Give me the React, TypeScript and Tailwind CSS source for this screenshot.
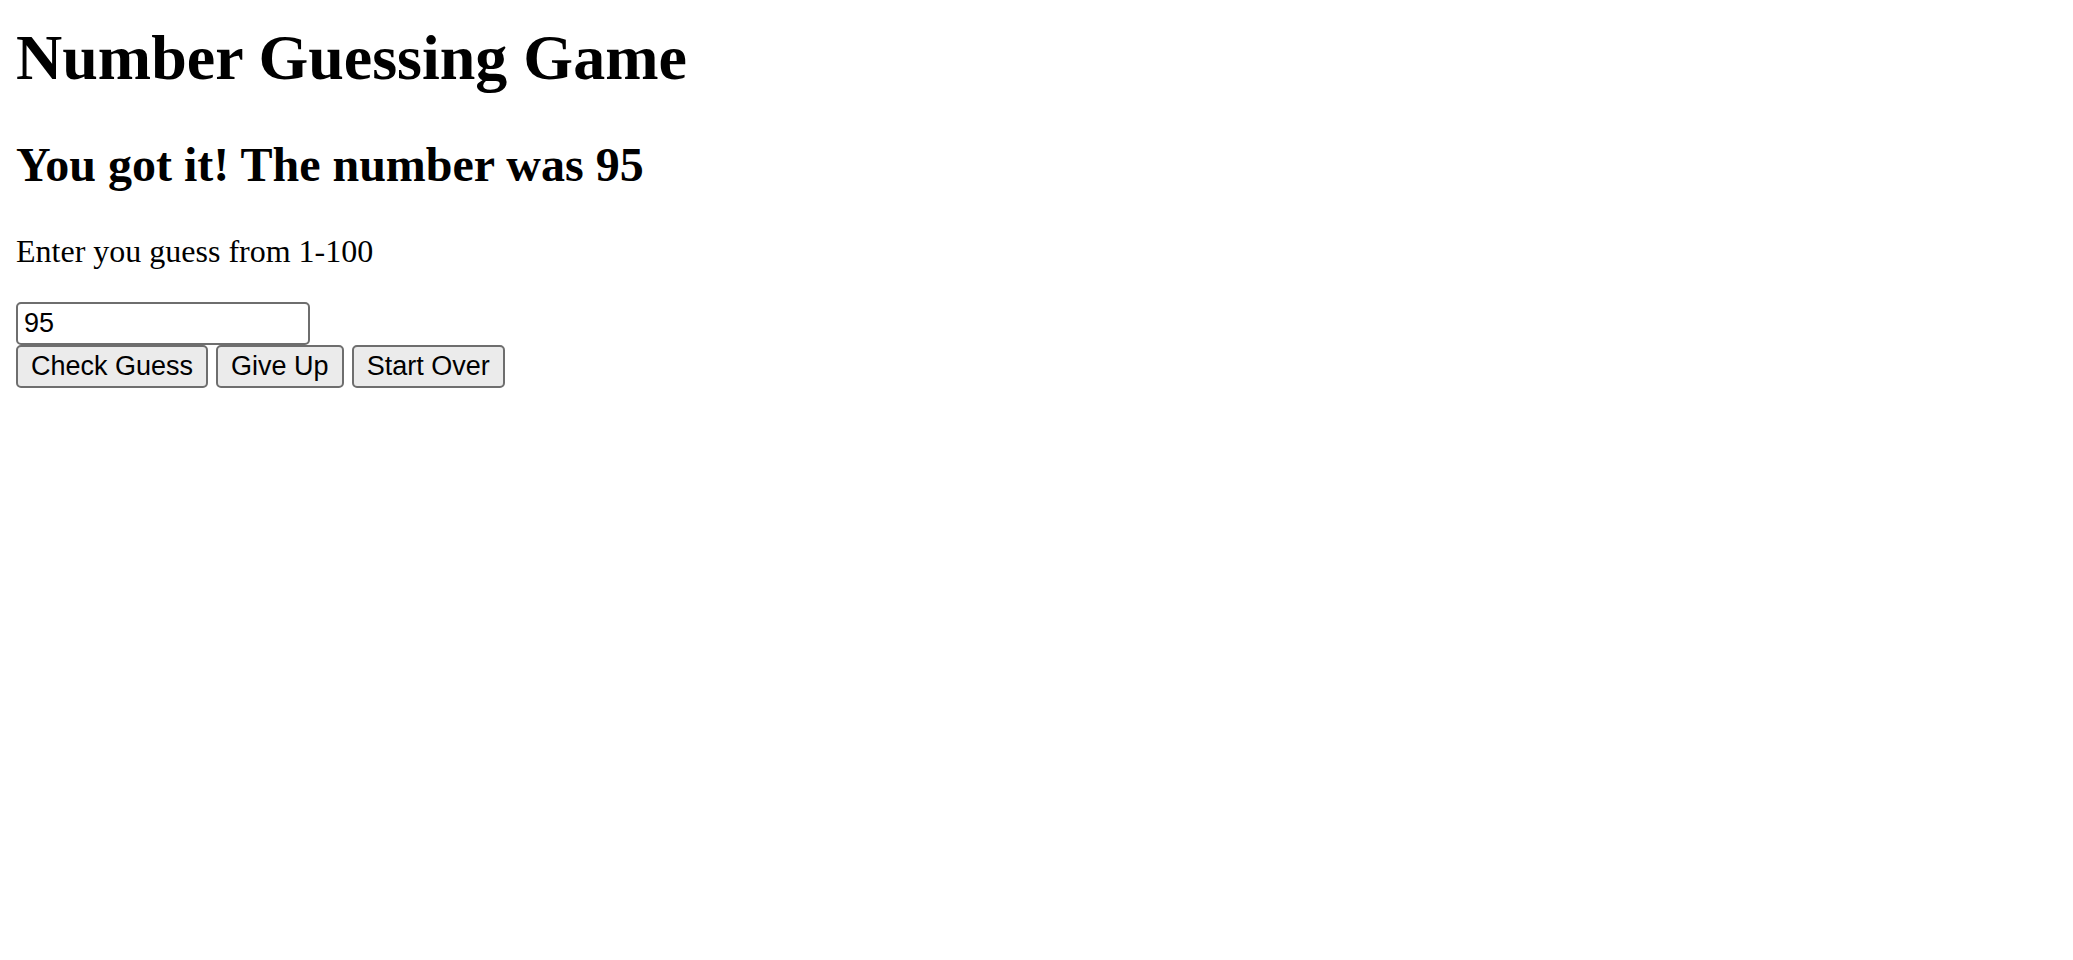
import { useState } from "react";

const buttonClass =
  "h-[43px] rounded-[5px] border-2 border-[#6e6e6e] bg-[#ebebeb] px-[13px] pb-0.5 text-[27px] leading-[30px] text-black";

export default function App() {
  const [guess, setGuess] = useState("95");

  return (
    <main className="min-h-screen bg-white px-4 pt-5 font-['Liberation_Serif',serif] text-black">
      <h1 className="text-[64px] leading-[76px] font-bold">Number Guessing Game</h1>
      <h2 className="mt-10 text-[48px] leading-[58px] font-bold">
        You got it! The number was 95
      </h2>
      <p className="mt-[38px] text-[32px] leading-[38px]">
        <label htmlFor="guess">Enter you guess from 1-100</label>
      </p>
      <div className="mt-8 flex flex-col items-start font-['Liberation_Sans',sans-serif]">
        <input
          id="guess"
          type="text"
          value={guess}
          onChange={(event) => setGuess(event.target.value)}
          className="h-[43px] w-[294px] rounded-[5px] border-2 border-[#6e6e6e] bg-white px-[6px] text-[27px] leading-[30px]"
        />
        <div className="flex gap-2">
          <button type="button" className={buttonClass}>Check Guess</button>
          <button type="button" className={buttonClass}>Give Up</button>
          <button type="button" className={buttonClass}>Start Over</button>
        </div>
      </div>
    </main>
  );
}
